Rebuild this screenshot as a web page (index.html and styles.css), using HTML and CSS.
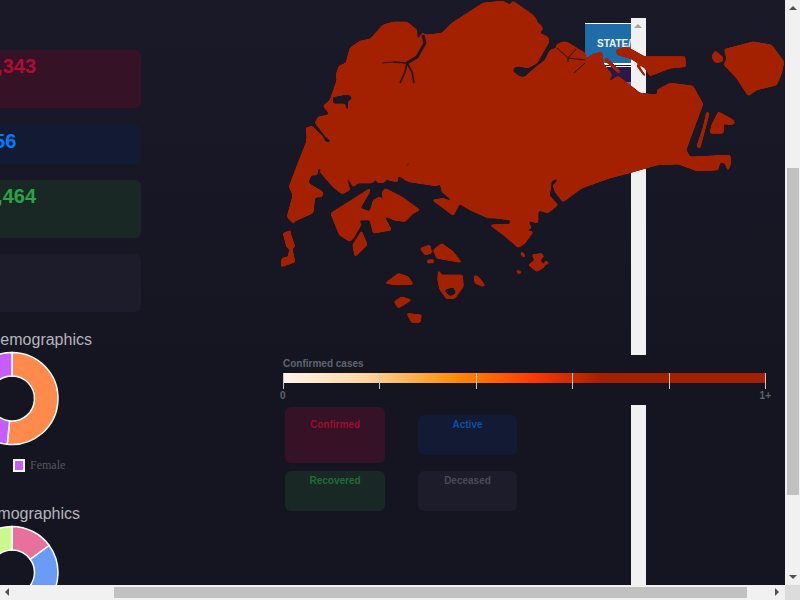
FILE: index.html
```html
<!DOCTYPE html>
<html lang="en">
<head>
  <meta charset="UTF-8">
  <title>Singapore - COVID-19 Dashboard</title>
  <meta name="viewport" content="width=device-width, initial-scale=1.0">
  <link rel="stylesheet" href="styles.css">
</head>
<body>

  <div class="viewport">
    <div class="layout">

      <section class="stats">
        <div class="stat stat-confirmed"><span class="count">1,343</span></div>
        <div class="stat stat-active"><span class="count">456</span></div>
        <div class="stat stat-recovered"><span class="count">1,464</span></div>
        <div class="stat stat-deceased"></div>

        <h3 class="demo-title demo-gender">Gender Demographics</h3>
        <svg class="donut" viewBox="-50 -50.5 100 100" aria-hidden="true">
          <path fill="#ff8a4c" d="M0,-46 A46,46 0 1 1 -4.81,45.75 L-2.35,22.38 A22.5,22.5 0 1 0 0,-22.5 Z"/>
          <path fill="#c65cfa" d="M-4.81,45.75 A46,46 0 0 1 0,-46 L0,-22.5 A22.5,22.5 0 0 0 -2.35,22.38 Z"/>
        </svg>
        <div class="demo-legend"><span class="swatch"></span>Female</div>

        <h3 class="demo-title demo-age">Age Demographics</h3>
        <svg class="donut" viewBox="-50 -50.5 100 100" aria-hidden="true">
          <path fill="#e8709c" d="M0,-46 A46,46 0 0 1 37.2,-27 L18.2,-13.2 A22.5,22.5 0 0 0 0,-22.5 Z"/>
          <path fill="#6a9bf5" d="M37.2,-27 A46,46 0 0 1 35.2,29.6 L17.2,14.5 A22.5,22.5 0 0 0 18.2,-13.2 Z"/>
          <path fill="#ccf78f" d="M-26.4,-37.7 A46,46 0 0 1 0,-46 L0,-22.5 A22.5,22.5 0 0 0 -12.9,-18.4 Z"/>
        </svg>
      </section>

      <section class="map-col">
        <div class="legend">
          <div class="legend-title">Confirmed cases</div>
          <div class="legend-bar">
            <i></i><i></i><i></i><i></i><i></i><i></i>
          </div>
          <div class="legend-ends"><span>0</span><span>1+</span></div>
        </div>

        <div class="mini-grid">
          <div class="mini mini-confirmed">Confirmed</div>
          <div class="mini mini-active">Active</div>
          <div class="mini mini-recovered">Recovered</div>
          <div class="mini mini-deceased">Deceased</div>
        </div>
      </section>
    </div>

    <!-- state table peeking out from behind the map -->
    <div class="state-table">
      <div class="state-head">STATE/UT</div>
      <div class="state-row"><div class="state-cell"></div></div>
    </div>
    <div class="inner-scroll"><span class="arrow-up"></span></div>
    <div class="legend-cover"></div>

    <svg class="map" viewBox="0 0 785 585" aria-hidden="true">
      <defs>
        <!-- rounds the traced corners so the coast reads as a coast -->
        <filter id="coast" x="0" y="0" width="100%" height="100%" color-interpolation-filters="sRGB">
          <feGaussianBlur stdDeviation="0.8"/>
          <feComponentTransfer>
            <feFuncA type="linear" slope="5" intercept="-2"/>
          </feComponentTransfer>
        </filter>
      </defs>

      <g filter="url(#coast)">
      <path fill-rule="evenodd" d="M287,217 L293,195 289,187 298,163 306,143 307,137 306,128 312,126 323,137 325,142 330,143 331,140 327,138 315,123 318,117 328,115 329,113 323,106 328,102 330,100 337,80 336,75 339,66 346,63 350,48 360,41 370,39 383,25 393,22 407,22 417,30 417,42 422,33 427,35 442,33 452,23 483,3 503,1 510,5 513,1 533,15 538,22 532,23 540,24 543,29 539,33 548,37 549,42 537,63 528,68 518,66 513,68 513,72 520,77 525,77 530,72 545,60 550,50 557,48 556,45 562,42 567,42 585,53 586,60 583,65 587,58 593,54 602,52 603,63 612,75 606,84 618,76 630,85 640,93 658,95 657,90 670,83 693,86 703,104 686,150 690,157 730,155 731,163 728,171 725,163 720,162 718,170 697,171 678,164 657,165 633,172 610,178 582,188 563,202 555,192 553,185 558,181 556,178 551,182 550,192 549,195 558,205 548,213 538,210 538,223 533,222 520,217 510,220 495,218 488,218 470,210 460,204 452,200 442,192 440,183 437,186 410,182 403,179 405,172 412,159 407,163 403,173 402,178 397,175 398,182 388,180 388,175 385,182 377,183 377,178 372,183 358,183 353,187 348,177 346,177 350,190 342,194 333,187 320,172 322,168 318,168 317,175 311,175 308,183 323,192 322,197 315,197 313,213 293,222 294,223 290,231 283,233 287,248 290,248 288,257 282,258 281,267 295,262 292,248 295,247 290,232 294,224 Z M332,97 L348,94 353,98 348,102 349,110 346,110 345,104 333,104 Z"/>

      <!-- southern islands -->
      <g transform="translate(270 0) scale(.3333)">
        <path d="M182,640 L300,565 300,575 270,625 300,635 310,600 330,590 350,620 335,580 345,565 395,590 450,630 430,640 405,665 370,660 340,645 365,690 310,700 300,660 262,660 275,672 250,715 240,725 208,705 Z"/>
        <path d="M275,692 L292,735 255,770 248,735 Z"/>
        <path d="M487,600 L520,595 545,605 567,615 550,647 Z"/>
        <path d="M450,745 L480,735 485,760 465,765 Z"/>
        <path d="M490,750 L515,730 550,755 575,788 530,780 500,775 Z"/>
        <path d="M472,780 L480,778 480,790 472,790 Z M483,778 L491,778 490,790 484,790 Z"/>
        <path fill-rule="evenodd" d="M505,810 L515,825 578,825 580,860 555,895 530,897 510,870 503,840 Z M520,870 L550,860 560,880 540,890 Z"/>
        <path d="M345,850 L385,820 415,830 430,853 380,855 Z"/>
        <path d="M372,905 L395,890 425,900 385,925 Z"/>
        <path d="M410,940 L455,945 450,968 425,968 Z"/>
        <path d="M612,825 L625,830 645,855 640,860 615,850 Z"/>
      </g>

      <!-- north east islands -->
      <g transform="translate(530 0) scale(.3333)">
        <path d="M225,175 L232,175 272,215 265,220 225,182 Z"/>
        <path d="M258,150 L290,140 345,170 465,170 467,200 420,205 360,228 345,205 325,190 300,175 262,165 Z"/>
        <path d="M318,195 L325,195 348,228 342,228 Z"/>
        <path d="M583,148 L670,125 725,135 762,185 755,220 740,255 680,270 655,288 620,235 582,195 590,175 Z"/>
        <path d="M545,170 L555,152 578,170 578,185 555,188 Z"/>
        <path d="M530,335 L538,340 530,370 510,445 500,440 520,380 Z"/>
        <path d="M565,335 L610,360 615,370 600,375 580,370 580,400 540,400 545,375 Z"/>
      </g>

      <!-- south east islands -->
      <g transform="translate(470 150) scale(.3333)">
        <path d="M60,225 L110,222 150,240 190,245 165,280 145,293 100,255 Z"/>
        <path d="M120,215 L150,202 175,215 185,235 150,240 120,225 Z"/>
        <path d="M150,310 L158,305 167,320 160,322 Z"/>
        <path d="M185,315 L215,310 222,320 210,330 225,350 200,365 175,345 195,330 Z"/>
        <path d="M225,330 L238,340 225,345 Z"/>
        <path d="M140,360 L155,365 150,372 140,368 Z"/>
      </g>
      </g>

      <path class="creek wide" d="M423,35 L425,43 417,57 407,63"/>
      <path class="creek mid" d="M407,63 L405,72 400,83 M407,63 L412,72 414,83 M407,63 L393,62"/>
      <path class="creek" d="M393,62 L382,63 M557,48 L568,58 576,49 M568,58 L585,60 M568,58 L568,62 M585,63 L574,73"/>
    </svg>
  </div>

  <div class="scroll-y">
    <span class="arrow-up"></span>
    <div class="thumb-y"></div>
    <span class="arrow-down"></span>
  </div>
  <div class="scroll-x">
    <span class="arrow-left"></span>
    <div class="thumb-x"></div>
    <span class="arrow-right"></span>
  </div>
  <div class="scroll-corner"></div>

</body>
</html>
```

FILE: styles.css
```css
:root {
  --bg-top: #191927;
  --bg: #151522;
  --map: #a42100;
  --track: #f1f1f1;
  --thumb: #c1c1c1;
}

html, body {
  height: 100%;
}

body {
  margin: 0;
  display: grid;
  grid-template-columns: 1fr 15px;
  grid-template-rows: 1fr 15px;
  overflow: hidden;
  font-family: 'Liberation Sans', Arial, sans-serif;
}

.viewport {
  position: relative;
  overflow: hidden;
  background: linear-gradient(var(--bg-top), var(--bg) 400px);
}

.layout {
  display: flex;
}

/* left column, scrolled partly out of view */
.stats {
  width: 236px;
  flex: none;
  padding-top: 50px;
}

.stat {
  width: 261px;
  height: 58px;
  margin: 0 0 16px -120px;
  border-radius: 6px;
  box-sizing: border-box;
  padding-left: 106px;
  font-size: 20px;
  font-weight: bold;
  line-height: 32px;
}

.stat-confirmed { background: #351226; color: #b00b34; }
.stat-active { background: #121b33; color: #007bff; height: 40px; padding-left: 103px; line-height: 34px; }
.stat-recovered { background: #192825; color: #27a546; }
.stat-deceased { background: #1c1c2a; }

.demo-title {
  margin: 0;
  font-size: 16px;
  font-weight: normal;
  line-height: 20px;
  color: #b5b5bb;
  white-space: nowrap;
}

.demo-gender { margin: 18px 0 0 -69px; }
.demo-age { margin: 32px 0 0 -56px; }

.donut {
  display: block;
  width: 100px;
  height: 100px;
  margin: -2px 0 0 -38px;
  overflow: visible;
}

.donut path {
  stroke: #fff;
  stroke-width: 1.5;
}

.demo-legend {
  display: flex;
  align-items: center;
  gap: 5px;
  margin: 10px 0 0 13px;
  height: 14px;
  font-family: 'Liberation Serif', serif;
  font-size: 12px;
  color: #55555f;
}

.swatch {
  width: 8px;
  height: 9px;
  border: 2px solid #fff;
  background: #c65cfa;
}

/* right column */
.map-col {
  flex: 1;
  padding: 355px 0 0 47px;
}

.legend {
  position: relative;
  z-index: 3;
  height: 50px;
  box-sizing: border-box;
  padding-right: 19px;
  font-size: 10px;
  font-weight: bold;
  color: #5f6570;
}

.legend-title {
  line-height: 12px;
  padding-top: 3px;
}

.legend-bar {
  display: flex;
  justify-content: space-between;
  height: 10px;
  margin-top: 3px;
  background: linear-gradient(90deg, #fff5eb 0%, #fdd6a0 17%, #ff8c00 36%, #ff3800 52%, #a32000 66%, #a32000 100%);
}

.legend-bar i {
  width: 1px;
  height: 16px;
  background: #c8c8c8;
}

.legend-ends {
  display: flex;
  justify-content: space-between;
  margin: 7px -5px 0 -3px;
  line-height: 12px;
}

.mini-grid {
  display: grid;
  grid-template-columns: 100px 99px;
  column-gap: 33px;
  row-gap: 8px;
  margin: 2px 0 0 2px;
}

.mini {
  height: 40px;
  border-radius: 6px;
  box-sizing: border-box;
  padding-top: 4px;
  font-size: 10px;
  font-weight: bold;
  line-height: 12px;
  text-align: center;
}

.mini-confirmed { height: 56px; padding-top: 12px; background: #351226; color: #a00a30; }
.mini-active { align-self: center; background: #121b33; color: #0a4fa8; }
.mini-recovered { background: #192825; color: #1f6d3a; }
.mini-deceased { background: #1c1c2a; color: #4a4a55; }

/* things the map is drawn on top of */
.state-table {
  position: absolute;
  left: 585px;
  top: 23px;
  width: 50px;
  border-top: 1px solid #fff;
}

.state-head {
  height: 41px;
  box-sizing: border-box;
  padding: 14px 0 0 12px;
  background: #1f6ca8;
  color: #f0f4f8;
  font-size: 10px;
  font-weight: bold;
  line-height: 12px;
  white-space: nowrap;
  overflow: hidden;
  border-bottom: 2px solid #fff;
}

.state-row {
  height: 40px;
  margin-top: 1px;
  border-top: 1px solid #fff;
  background: #2a1848;
  overflow: hidden;
}

.state-cell {
  width: 5px;
  height: 6px;
  margin: 15px 0 0 42px;
  background: #3f74b8;
}

.inner-scroll {
  position: absolute;
  left: 631px;
  top: 18px;
  bottom: 0;
  width: 15px;
  background: var(--track);
}

.legend-cover {
  position: absolute;
  left: 620px;
  top: 355px;
  width: 40px;
  height: 50px;
  background: var(--bg);
  z-index: 1;
}

.map {
  position: absolute;
  left: 0;
  top: 0;
  width: 785px;
  height: 585px;
  z-index: 2;
  pointer-events: none;
}

.map path {
  fill: var(--map);
  stroke: var(--map);
  stroke-width: .8;
  stroke-linejoin: round;
}

.map g g path {
  stroke-width: 2.4;
}

.map .creek {
  fill: none;
  stroke: #191927;
  stroke-width: 1;
}

.map .creek.mid {
  stroke-width: 1.6;
}

.map .creek.wide {
  stroke-width: 3;
}

/* browser scrollbars */
.scroll-y {
  position: relative;
  background: var(--track);
}

.thumb-y {
  position: absolute;
  left: 2px;
  right: 1px;
  top: 168px;
  height: 327px;
  background: var(--thumb);
}

.scroll-x {
  position: relative;
  background: var(--track);
}

.thumb-x {
  position: absolute;
  left: 114px;
  width: 633px;
  top: 2px;
  height: 11px;
  background: var(--thumb);
}

.scroll-corner {
  background: #dcdcdc;
}

.arrow-up, .arrow-down, .arrow-left, .arrow-right {
  position: absolute;
  width: 0;
  height: 0;
  border: 4px solid transparent;
}

.arrow-up { left: 4px; top: 2px; border-bottom-color: #505050; }
.arrow-down { left: 4px; bottom: 2px; border-top-color: #505050; }
.arrow-left { left: 1px; top: 3px; border-right-color: #505050; }
.arrow-right { right: 2px; top: 3px; border-left-color: #505050; }

.inner-scroll .arrow-up { left: 3px; border-bottom-color: #a3a3a3; }
```
